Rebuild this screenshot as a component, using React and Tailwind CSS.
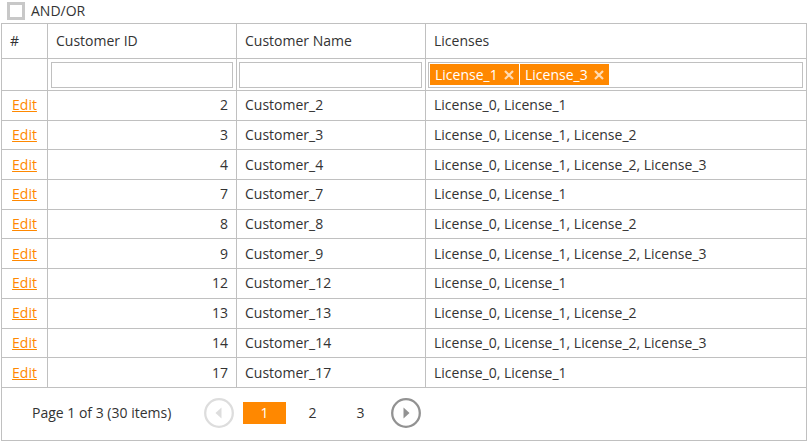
import { useState } from "react";

const customerIds = [2, 3, 4, 7, 8, 9, 12, 13, 14, 17];
const licenseSets = [
  "License_0, License_1",
  "License_0, License_1, License_2",
  "License_0, License_1, License_2, License_3",
];

function Token({ label, onRemove }) {
  return (
    <span className="flex h-[21px] w-[89px] items-center justify-between bg-[#ff8800] pr-1 pl-[5px] text-white">
      {label}
      <button
        type="button"
        aria-label={`Remove ${label}`}
        onClick={onRemove}
        className="flex h-3 w-3 items-center justify-center"
      >
        <svg viewBox="0 0 12 12" className="h-3 w-3" fill="none" stroke="#ffdbb2" strokeWidth="2.2">
          <path d="M2 2 10 10M10 2 2 10" />
        </svg>
      </button>
    </span>
  );
}

function ArrowButton({ label, disabled, path }) {
  const colour = disabled ? "#dddddd" : "#929292";
  return (
    <button type="button" aria-label={label} disabled={disabled} className="h-[30px] w-[30px]">
      <svg viewBox="0 0 30 30" className="h-[30px] w-[30px]">
        <circle cx="15" cy="15" r="13.8" fill="none" stroke={colour} strokeWidth="2.3" />
        <path d={path} fill={colour} />
      </svg>
    </button>
  );
}

export default function App() {
  const [tokens, setTokens] = useState(["License_1", "License_3"]);
  const [page, setPage] = useState(1);
  const input = "block h-[26px] w-full border border-[#c0c0c0] bg-white px-2 outline-none";
  const cell = "border border-[#c0c0c0] px-2 font-normal";
  const filterCell = "border border-[#c0c0c0] pr-[3px] pl-[2px]";

  return (
    <div className="bg-white pl-px font-['Open_Sans','Noto_Sans',sans-serif] text-[14px] leading-5 text-[#333333]">
      <label className="flex h-[23px] items-center gap-[6px] pb-[2px] pl-[6px]">
        <input
          type="checkbox"
          className="h-[18px] w-[18px] appearance-none border-3 border-[#c8c8c8] bg-white checked:bg-[#ff8800]"
        />
        AND/OR
      </label>
      <table className="w-full table-fixed border-collapse text-left">
        <colgroup>
          <col className="w-[46px]" />
          <col className="w-[189px]" />
          <col className="w-[189px]" />
          <col />
        </colgroup>
        <thead>
          <tr className="h-[35px]">
            <th className={cell}>#</th>
            <th className={cell}>Customer ID</th>
            <th className={cell}>Customer Name</th>
            <th className={cell}>Licenses</th>
          </tr>
          <tr className="h-8">
            <td className="border border-[#c0c0c0]"></td>
            <td className="border border-[#c0c0c0] px-[3px]">
              <input type="text" aria-label="Filter by customer ID" className={input} />
            </td>
            <td className={filterCell}>
              <input type="text" aria-label="Filter by customer name" className={input} />
            </td>
            <td className={filterCell}>
              <div className="flex h-[26px] items-center gap-px border border-[#c0c0c0] pl-px">
                {tokens.map((t) => (
                  <Token key={t} label={t} onRemove={() => setTokens(tokens.filter((x) => x !== t))} />
                ))}
                <input type="text" aria-label="Filter by license" className="min-w-0 flex-1 outline-none" />
              </div>
            </td>
          </tr>
        </thead>
        <tbody className="h-[297px]">
          {customerIds.map((id, i) => (
            <tr key={id}>
              <td className="border border-[#c0c0c0] text-center">
                <a href="#edit" className="text-[#ff8800] underline">Edit</a>
              </td>
              <td className={`${cell} text-right`}>{id}</td>
              <td className={cell}>{`Customer_${id}`}</td>
              <td className={cell}>{licenseSets[i % 3]}</td>
            </tr>
          ))}
        </tbody>
      </table>
      <nav aria-label="Pages" className="flex h-[53px] items-center border border-t-0 border-[#c0c0c0] pb-[2px] pl-[30px]">
        <span className="w-[172px]">Page 1 of 3 (30 items)</span>
        <ArrowButton label="Previous page" disabled path="M17.5 9.5v11L11.5 15z" />
        <div className="flex gap-[5px] px-[9px]">
          {[1, 2, 3].map((n) => (
            <button
              key={n}
              type="button"
              onClick={() => setPage(n)}
              className={`h-[22px] w-[43px] ${n === page ? "bg-[#ff8800] text-white" : ""}`}
            >
              {n}
            </button>
          ))}
        </div>
        <ArrowButton label="Next page" path="M12.5 9.5v11L18.5 15z" />
      </nav>
    </div>
  );
}
